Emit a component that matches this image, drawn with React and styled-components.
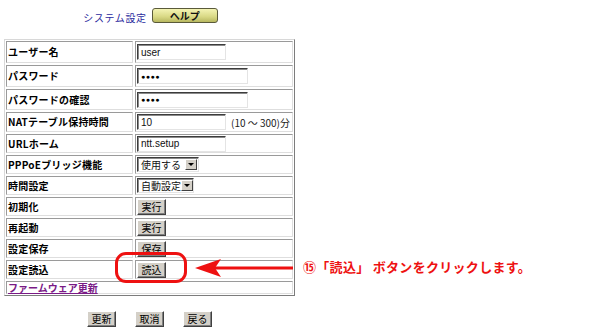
import React from 'react'
import styled, { createGlobalStyle } from 'styled-components'

const GlobalStyle = createGlobalStyle`
    body {
        margin : 0;
        background : #fff;
        font-family : "Noto Sans CJK JP", "DejaVu Sans", sans-serif;
    }
`
const Page = styled.div`
    position : relative;
    width : 600px;
    height : 331px;
    padding : 8px 0 0 4px;
    box-sizing : border-box;
`
const Form = styled.div`
    width : 291px;
    display : flex;
    flex-direction : column;
`
const Header = styled.div`
    display : flex;
    justify-content : center;
    align-items : center;
    gap : 5px;
    height : 15px;
    padding-left : 2px;
`
const Title = styled.span`
    font-size : 10px;
    letter-spacing : 0.6px;
    color : #2a2a9e;
    margin-top : 3px;
`
const HelpButton = styled.div`
    width : 64px;
    height : 13px;
    border : 1px solid #5a5a3a;
    border-radius : 3px;
    background : linear-gradient(#f4f4b4, #d8d884 60%, #b8b860);
    display : flex;
    justify-content : center;
    align-items : center;
    font-size : 10px;
    font-weight : 700;
    line-height : 1;
    color : #111;
`
const Table = styled.div`
    margin-top : 16px;
    display : grid;
    grid-template-columns : 127px 1fr;
    gap : 2px;
    padding : 1px;
    border : 1px solid;
    border-color : #d8d8d8 #7c7c7c #7c7c7c #d8d8d8;
`
const Cell = styled.div`
    height : ${p => p.$h}px;
    box-sizing : border-box;
    border : 1px solid;
    border-color : #9a9a9a #dedede #dedede #9a9a9a;
    display : flex;
    align-items : center;
    gap : 5px;
    padding-left : 1px;
    grid-column : ${p => (p.$wide ? '1 / -1' : 'auto')};
`
const Label = styled.span`
    font-size : 10px;
    font-weight : 700;
    color : #000;
    line-height : 1;
    letter-spacing : 0.2px;
    white-space : nowrap;
`
const Field = styled.div`
    width : ${p => p.$w}px;
    height : 16px;
    box-sizing : border-box;
    border : 1px solid;
    border-color : #3c3c3c #e4e4e4 #e4e4e4 #3c3c3c;
    box-shadow : inset 1px 1px 0 #8a8a8a;
    display : flex;
    align-items : center;
    padding-left : 3px;
    font-family : "Liberation Sans", Arial, sans-serif;
    font-size : 10px;
    color : #111;
`
const Dots = styled.span`
    font-size : 7px;
    letter-spacing : 0.5px;
    color : #000;
`
const Note = styled.span`
    font-size : 10px;
    color : #222;
    white-space : nowrap;
`
const Select = styled.div`
    width : ${p => p.$w}px;
    height : 15px;
    box-sizing : border-box;
    border : 1px solid;
    border-color : #3c3c3c #e4e4e4 #e4e4e4 #3c3c3c;
    box-shadow : inset 1px 1px 0 #8a8a8a;
    display : flex;
    align-items : center;
    justify-content : space-between;
    padding : 0 1px 0 3px;
    font-size : 10px;
    line-height : 1;
    white-space : nowrap;
    color : #111;
    background : #fff;
`
const Arrow = styled.span`
    flex : none;
    width : 12px;
    height : 11px;
    box-sizing : border-box;
    background : #d4d0c8;
    border : 1px solid;
    border-color : #fff #404040 #404040 #fff;
    display : flex;
    justify-content : center;
    align-items : center;
    &::after {
        content : '';
        border-left : 3px solid transparent;
        border-right : 3px solid transparent;
        border-top : 3px solid #000;
    }
`
const Button = styled.div`
    width : 29px;
    height : 16px;
    box-sizing : border-box;
    background : #d4d0c8;
    border : 1px solid;
    border-color : #fff #404040 #404040 #fff;
    box-shadow : inset -1px -1px 0 #808080;
    display : flex;
    justify-content : center;
    align-items : center;
    font-size : 10px;
    color : #000;
    line-height : 1;
`
const FirmwareLink = styled.a`
    font-size : 10px;
    font-weight : 700;
    color : #7a1a86;
    text-decoration : underline;
    line-height : 1;
    white-space : nowrap;
`
const Footer = styled.div`
    margin-top : 15px;
    display : flex;
    justify-content : center;
    gap : 19px;
`
const Circle = styled.div`
    position : absolute;
    left : 115px;
    top : 252px;
    width : 72px;
    height : 31px;
    box-sizing : border-box;
    border : 3px solid #ee1111;
    border-radius : 11px;
`
const Pointer = styled.svg`
    position : absolute;
    left : 194px;
    top : 258px;
`
const Callout = styled.div`
    position : absolute;
    left : 303px;
    top : 257px;
    font-size : 13px;
    font-weight : 700;
    color : #ee1111;
    white-space : nowrap;
    letter-spacing : 0.3px;
`

const rows = [
    { label : 'ユーザー名', h : 22, kind : 'text', w : 89, value : 'user' },
    { label : 'パスワード', h : 22, kind : 'pass', w : 111 },
    { label : 'パスワードの確認', h : 21, kind : 'pass', w : 111 },
    { label : 'NATテーブル保持時間', h : 20, kind : 'text', w : 89, value : '10', note : '(10 ～ 300)分' },
    { label : 'URLホーム', h : 19, kind : 'text', w : 89, value : 'ntt.setup' },
    { label : 'PPPoEブリッジ機能', h : 19, kind : 'select', w : 62, value : '使用する' },
    { label : '時間設定', h : 19, kind : 'select', w : 57, value : '自動設定' },
    { label : '初期化', h : 19, kind : 'button', value : '実行' },
    { label : '再起動', h : 19, kind : 'button', value : '実行' },
    { label : '設定保存', h : 19, kind : 'button', value : '保存' },
    { label : '設定読込', h : 19, kind : 'button', value : '読込' },
]

const Control = ({ row }) => {
    if (row.kind === 'pass') return <Field $w={row.w}><Dots>●●●●</Dots></Field>
    if (row.kind === 'select') return <Select $w={row.w}>{row.value}<Arrow /></Select>
    if (row.kind === 'button') return <Button>{row.value}</Button>
    return (
        <>
            <Field $w={row.w}>{row.value}</Field>
            {row.note && <Note>{row.note}</Note>}
        </>
    )
}

const App = () => {
  return (
    <>
        <GlobalStyle />
        <Page>
            <Form>
                <Header>
                    <Title>システム設定</Title>
                    <HelpButton>ヘルプ</HelpButton>
                </Header>
                <Table>
                    {rows.map(row => (
                        <React.Fragment key={row.label}>
                            <Cell $h={row.h}><Label>{row.label}</Label></Cell>
                            <Cell $h={row.h}><Control row={row} /></Cell>
                        </React.Fragment>
                    ))}
                    <Cell $h={13} $wide>
                        <FirmwareLink>ファームウェア更新</FirmwareLink>
                    </Cell>
                </Table>
                <Footer>
                    <Button>更新</Button>
                    <Button>取消</Button>
                    <Button>戻る</Button>
                </Footer>
            </Form>
            <Circle />
            <Pointer width="100" height="22" viewBox="0 0 100 22">
                <path d="M1 10 L27 1 L21 10 L27 19 Z" fill="#ee1111" />
                <rect x="20" y="8.5" width="79" height="3" fill="#ee1111" />
            </Pointer>
            <Callout>⑮「読込」 ボタンをクリックします。</Callout>
        </Page>
    </>
  )
}
export default App
